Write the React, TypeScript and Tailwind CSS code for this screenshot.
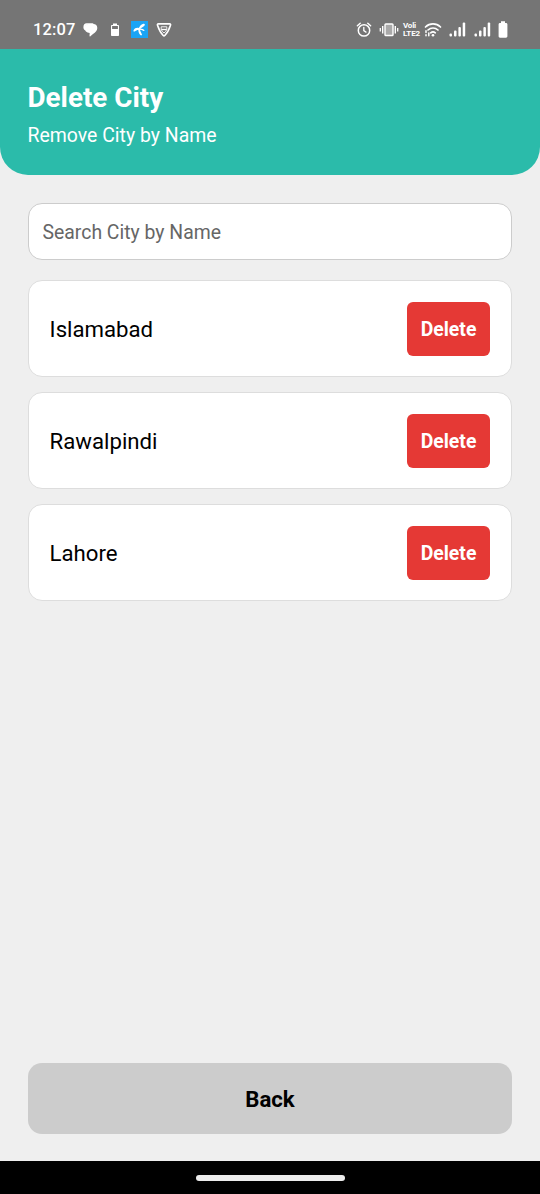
import { useState } from 'react'

const CITIES = ['Islamabad', 'Rawalpindi', 'Lahore']

function ChatIcon () {
  return (
    <svg width="15" height="16" viewBox="0 0 15 16" fill="#fff">
      <path d="M3.600 1.200h5.200c1 0 1.900.500 2.300 1.300H5.200C3.200 2.500 2 4 2 6v2.200C1 7.600.4 6.500.4 5.200.4 2.800 1.600 1.200 3.600 1.200Z" />
      <path d="M5.400 2.100h5c2.300 0 3.900 1.600 3.900 3.900 0 2.500-1.700 4.400-4.300 6l-2.600 2.300c-.5.400-1 .1-.9-.500l.2-2.800C3.500 10.700 1.600 8.900 1.600 6c0-2.300 1.500-3.900 3.800-3.900Z" />
    </svg>
  )
}

function SmallBatteryIcon () {
  return (
    <svg width="10" height="16" viewBox="0 0 10 16">
      <path d="M3 1.500h4V3h1.200c.5 0 .8.300.8.800v9.400c0 .5-.3.800-.8.800H1.800c-.5 0-.8-.3-.8-.8V3.800c0-.5.300-.8.800-.8H3V1.500Zm-.9 2.500v3h5.800V4H2.100Z" fill="#fff" fillRule="evenodd" />
    </svg>
  )
}

function CarrierIcon () {
  return (
    <svg width="17" height="17" viewBox="0 0 17 17">
      <path d="M0 0h17v17H0Z" fill="#1ba4f5" />
      <g fill="#fff">
        <path d="M7.500 8.300C8 5.500 9.900 3.300 12.400 2.700c1.700-.3 1.900 1.300.7 2.200C11.400 6.200 9.700 6.900 8.500 8.700Z" />
        <path d="M8.600 7.900c1.600-.5 3.600-.1 4.700 1.200.5.700 0 1.200-.7.800-1.300-.7-2.600-1.200-4.100-1.200Z" />
        <path d="M8.300 7.300C6 6.200 3.800 7.200 2.700 8.900c-.8 1.300.3 2 1.400 1.300C5.400 9.300 6.300 8.600 7.800 9Z" />
        <path d="M7.300 7.800c-.1 2.500.5 4.700 2 6.300.8.900 2 .2 1.600-.8-.8-1.800-1.700-3-2.100-5.200Z" />
      </g>
    </svg>
  )
}

function ShieldIcon () {
  return (
    <svg width="16" height="16" viewBox="0 0 16 16" fill="none" stroke="#fff" strokeLinejoin="round">
      <path d="M2.300 1.900h11.400c.8 0 1.100.7.800 1.400C13.300 7 11.300 11 8.800 13.500c-.5.500-1.100.5-1.600 0C4.700 11 2.700 7 1.500 3.300 1.200 2.600 1.500 1.900 2.300 1.900Z" strokeWidth="1.600" />
      <path d="M5.200 4.800h5.600v2.700C10.200 9 9.300 10 8 11 6.700 10 5.800 9 5.200 7.500Z" strokeWidth="0.900" />
      <path d="M5.300 7.500h5.400" strokeWidth="1.300" />
    </svg>
  )
}

function AlarmIcon () {
  return (
    <svg width="16" height="16" viewBox="0 0 16 16" fill="none" stroke="#fff" strokeLinecap="round">
      <circle cx="8" cy="8.400" r="5.700" strokeWidth="1.500" />
      <path d="M1.400 3.700 4.200 1.300M14.600 3.700l-2.800-2.400" strokeWidth="1.500" />
      <path d="M7.800 5.300v3.300l2.200 1.500" strokeWidth="1.300" />
    </svg>
  )
}

function VibrateIcon () {
  return (
    <svg width="20" height="16" viewBox="0 0 20 16" fill="none" stroke="#fff">
      <rect x="6" y="2" width="8" height="11.500" rx="0.800" fill="#a9a9a9" strokeWidth="1.400" />
      <path d="M3.700 4v7.500M16.300 4v7.500" strokeWidth="1.400" />
      <path d="M1.300 6v3.500M18.700 6v3.500" strokeWidth="1.300" />
    </svg>
  )
}

function WifiIcon () {
  return (
    <svg width="18" height="16" viewBox="0 0 18 16" fill="none" stroke="#fff" strokeLinecap="round">
      <path d="M1.500 5C5.800.900 12.200.900 16.500 5" strokeWidth="1.700" />
      <path d="M4 8c2.900-2.700 7.100-2.700 10 0" strokeWidth="1.700" />
      <path d="M6.700 10.800c1.400-1.200 3.200-1.200 4.600 0" strokeWidth="1.700" />
      <circle cx="9" cy="13.200" r="1.300" fill="#fff" stroke="none" />
      <path d="M2 8.800v1.700M2 12.700v1M4.800 11v2.700" strokeWidth="1.500" />
    </svg>
  )
}

function SignalIcon () {
  return (
    <svg width="17" height="16" viewBox="0 0 17 16" fill="#fff">
      <rect x="0.500" y="11.500" width="2.500" height="3" rx="1" />
      <rect x="5" y="8.500" width="2.500" height="6" rx="1" />
      <rect x="9.400" y="5" width="2.500" height="9.500" rx="1" />
      <rect x="13.700" y="0.500" width="2.500" height="14" rx="1" />
    </svg>
  )
}

function BatteryIcon () {
  return (
    <svg width="10" height="18" viewBox="0 0 10 18" fill="#fff">
      <path d="M3 .300h4v1.700h1c.8 0 1.400.6 1.400 1.400v11.900c0 .8-.6 1.400-1.400 1.400H2c-.8 0-1.400-.6-1.400-1.400V3.400C.6 2.600 1.200 2 2 2h1Z" />
    </svg>
  )
}

function StatusBar () {
  return (
    <div className="flex h-[49px] shrink-0 items-center bg-[#757575] pt-[10px] pr-[32px] pl-[33px] text-white">
      <span className="w-[50px] text-[16.500px] leading-5 font-medium tracking-[0.100px]">12:07</span>
      <ChatIcon />
      <div className="ml-[12px]"><SmallBatteryIcon /></div>
      <div className="ml-[11px]"><CarrierIcon /></div>
      <div className="ml-[8px]"><ShieldIcon /></div>
      <div className="ml-auto"><AlarmIcon /></div>
      <div className="ml-[7px]"><VibrateIcon /></div>
      <div className="ml-[4px] w-[19px] text-[8px] leading-[8px] font-bold whitespace-nowrap">
        <div className="tracking-[-0.200px]">Voli</div>
        <div className="tracking-[-0.100px]">LTE2</div>
      </div>
      <div className="ml-[2px]"><WifiIcon /></div>
      <div className="ml-[7px]"><SignalIcon /></div>
      <div className="ml-[8px]"><SignalIcon /></div>
      <div className="ml-[7px]"><BatteryIcon /></div>
    </div>
  )
}

interface CityCardProps {
  name: string
  onDelete: () => void
}

function CityCard ({ name, onDelete }: CityCardProps) {
  return (
    <li className="flex h-[97px] items-center justify-between rounded-[14px] border border-[#dddddd] bg-white pr-[21px] pl-[20.600px]">
      <span className="text-[22.200px] leading-[30px] text-black">{name}</span>
      <button
        type="button"
        onClick={onDelete}
        className="h-[54px] w-[83px] rounded-[6px] bg-[#e53935] pt-[2px] text-[19.400px] font-bold text-white"
      >
        Delete
      </button>
    </li>
  )
}

export default function App () {
  const [cities, setCities] = useState(CITIES)
  const [query, setQuery] = useState('')
  const visible = cities.filter(city => city.toLowerCase().includes(query.trim().toLowerCase()))

  return (
    <div className="flex h-[1194px] w-[540px] flex-col bg-[#efefef] font-['Roboto',sans-serif]">
      <StatusBar />
      <header className="h-[126px] shrink-0 rounded-b-[28px] bg-[#2bbbaa] px-[27.500px] pt-[30px] text-white">
        <h1 className="text-[27.800px] leading-[38px] font-bold">Delete City</h1>
        <p className="mt-[5px] text-[19.450px] leading-[27px]">Remove City by Name</p>
      </header>
      <main className="flex grow flex-col px-[28px] pt-[28px] pb-[27px]">
        <input
          type="text"
          value={query}
          onChange={e => setQuery(e.target.value)}
          placeholder="Search City by Name"
          className="h-[57px] w-full rounded-[14px] border border-[#cccccc] bg-white px-[13.500px] pt-[2px] text-[19.400px] text-black placeholder:text-[#666666]"
        />
        <ul className="mt-[20px] flex flex-col gap-[15px]">
          {visible.map(city => (
            <CityCard
              key={city}
              name={city}
              onDelete={() => setCities(cities.filter(c => c !== city))}
            />
          ))}
        </ul>
        <button type="button" className="mt-auto h-[71px] w-full rounded-[14px] bg-[#cccccc] pt-[2px] text-[22.200px] font-bold text-black">
          Back
        </button>
      </main>
      <div className="flex h-[33px] shrink-0 items-center justify-center bg-black">
        <div className="h-[6px] w-[149px] rounded-full bg-[#ececec]" />
      </div>
    </div>
  )
}
